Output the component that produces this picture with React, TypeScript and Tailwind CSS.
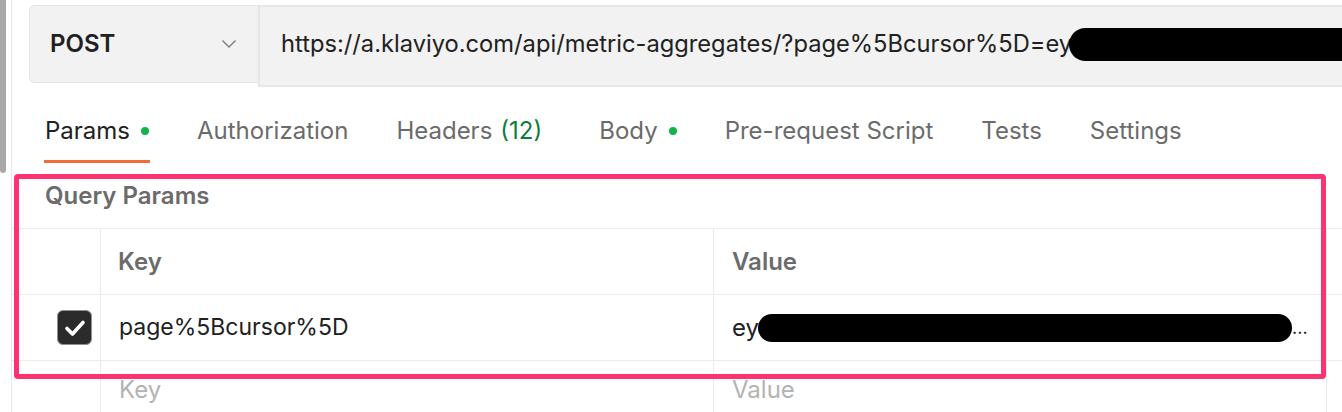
import React from 'react';

const tabs = [
  { label: 'Params', dot: true, active: true },
  { label: 'Authorization' },
  { label: 'Headers', count: '(12)' },
  { label: 'Body', dot: true },
  { label: 'Pre-request Script' },
  { label: 'Tests' },
  { label: 'Settings' },
];

function Tab({ label, dot, active, count }: { label: string; dot?: boolean; active?: boolean; count?: string }) {
  return (
    <div className={`flex flex-col ${count ? 'pr-[9px]' : ''}`}>
      <div className={`flex items-center h-[30px] leading-[30px] ${active ? 'text-[#212121]' : 'text-[#6b6b6b]'}`}>
        <span>{label}</span>
        {count && <span className="ml-[8px] text-[#107c3b]">{count}</span>}
        {dot && <span className="ml-[11px] w-[8px] h-[8px] rounded-full bg-[#13b34b]" />}
      </div>
      <div className={`h-[3px] mt-[14px] -mx-[1px] ${active ? 'bg-[#f26b3a]' : 'bg-transparent'}`} />
    </div>
  );
}

export default function App() {
  return (
    <div className="w-[1342px] h-[412px] overflow-hidden bg-white flex font-['Inter','Liberation_Sans',sans-serif]">
      <div className="w-[12px] shrink-0 border-r border-[#e9e9e9]">
        <div className="w-[6px] h-[173px] bg-[#a8a8a8] rounded-b-[3px]" />
      </div>

      <div className="flex-1 min-w-0 relative">
        {/* request bar */}
        <div className="flex items-start pt-[5px] pl-[17px]">
          <div className="w-[229px] h-[78px] shrink-0 bg-[#f2f2f2] border border-r-0 border-[#e5e5e5] rounded-l-[6px] flex items-center justify-between pl-[20px] pr-[21px]">
            <span className="text-[24px] font-semibold text-[#212121]">POST</span>
            <svg width="16" height="10" viewBox="0 0 16 10" fill="none">
              <path d="M1.5 1.5 L8 8 L14.5 1.5" stroke="#7a7a7a" strokeWidth="1.4" />
            </svg>
          </div>
          <div className="flex-1 min-w-0 h-[82px] bg-[#f2f2f2] border-l-2 border-y-2 border-[#e6e6e6] flex items-center pl-[21px] pb-[4px] overflow-hidden">
            <span className="whitespace-nowrap text-[23.7px] text-[#212121]">
              https://a.klaviyo.com/api/metric-aggregates/?page%5Bcursor%5D=ey
            </span>
            <span className="shrink-0 -ml-[3px] w-[300px] h-[33px] rounded-full bg-black" />
          </div>
        </div>

        {/* tabs */}
        <div className="flex items-start pl-[33px] pt-[29px] gap-[48px] text-[24px] h-[92px]">
          {tabs.map((t) => (
            <Tab key={t.label} {...t} />
          ))}
        </div>

        {/* query params */}
        <div className="h-[50px] border-b border-[#ebebeb] pl-[33px] pt-[2px]">
          <span className="text-[24px] leading-[30px] font-semibold text-[#6b6b6b]">Query Params</span>
        </div>

        <div className="grid grid-cols-[89px_613px_613px_1fr] text-[24px]">
          <div className="h-[66px] border-r border-b border-[#ebebeb]" />
          <div className="h-[66px] border-r border-b border-[#ebebeb] flex items-center pl-[17px] font-semibold text-[#6b6b6b]">Key</div>
          <div className="h-[66px] border-r border-b border-[#ebebeb] flex items-center pl-[18px] font-semibold text-[#6b6b6b]">Value</div>
          <div className="h-[66px] border-b border-[#ebebeb]" />

          <div className="h-[66px] border-r border-b border-[#ebebeb] flex items-center pl-[45px]">
            <div className="w-[35px] h-[35px] rounded-[6px] bg-[#2b2b2b] border-[1.5px] border-[#8f8f8f] flex items-center justify-center">
              <svg width="22" height="18" viewBox="0 0 22 18" fill="none">
                <path d="M3 9.5 L8.5 15 L19 3.5" stroke="white" strokeWidth="3.6" strokeLinecap="round" strokeLinejoin="round" />
              </svg>
            </div>
          </div>
          <div className="h-[66px] border-r border-b border-[#ebebeb] flex items-center pl-[18px] text-[23px] text-[#212121]">page%5Bcursor%5D</div>
          <div className="h-[66px] border-r border-b border-[#ebebeb] flex items-center pl-[18px] text-[#212121] overflow-hidden">
            <span>ey</span>
            <span className="shrink-0 -ml-[1px] w-[534px] h-[28px] rounded-full bg-black" />
            <span className="text-[18px]">...</span>
          </div>
          <div className="h-[66px] border-b border-[#ebebeb]" />

          <div className="h-[66px] border-r border-[#ebebeb]" />
          <div className="h-[66px] border-r border-[#ebebeb] flex items-center pl-[18px] pb-[8px] text-[#b3b3b3]">Key</div>
          <div className="h-[66px] border-r border-[#ebebeb] flex items-center pl-[18px] pb-[8px] text-[#b3b3b3]">Value</div>
          <div className="h-[66px]" />
        </div>

        {/* highlight annotation */}
        <div className="absolute left-[2px] top-[174px] w-[1312px] h-[205px] border-[5px] border-[#fc3370] rounded-[4px] pointer-events-none" />
      </div>
    </div>
  );
}
